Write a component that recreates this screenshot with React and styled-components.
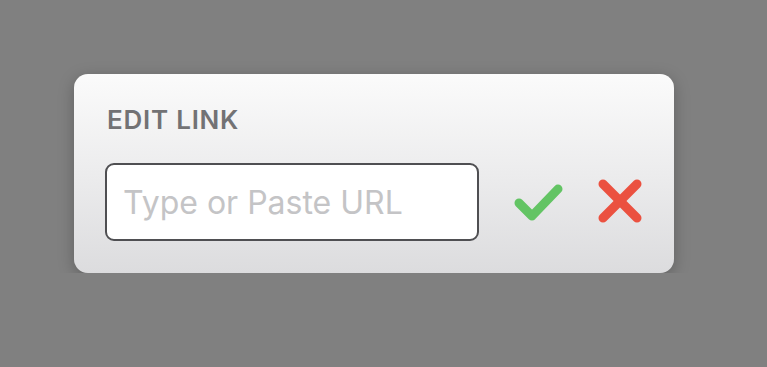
import React from "react";
import styled, { createGlobalStyle } from "styled-components";

const GlobalStyle = createGlobalStyle`
  html, body {
    margin: 0;
    background: #808080;
    font-family: "Inter", "Liberation Sans", sans-serif;
  }
`;

const Page = styled.div`
  padding: 74px 0 0 74px;
`;

const Card = styled.div`
  width: 600px;
  height: 199px;
  box-sizing: border-box;
  padding: 30px 31px 0 31px;
  border-radius: 14px;
  background: linear-gradient(180deg, #fbfbfb 0%, #ececed 50%, #dcdcde 100%);
  box-shadow: 0 4px 16px rgba(0, 0, 0, 0.25);
`;

const Title = styled.div`
  font-size: 26px;
  font-weight: 600;
  color: #727274;
  letter-spacing: 0.75px;
  padding-left: 2px;
  line-height: 32px;
`;

const Row = styled.div`
  display: flex;
  align-items: center;
  margin-top: 27px;
`;

const UrlInput = styled.input`
  width: 374px;
  height: 78px;
  box-sizing: border-box;
  border: 2px solid #4f4f52;
  border-radius: 9px;
  background: #fff;
  padding: 0 16px;
  font-family: inherit;
  font-size: 32px;
  color: #333;
  outline: none;

  &::placeholder {
    color: #c4c4c6;
  }
`;

const IconButton = styled.button`
  border: none;
  background: none;
  padding: 0;
  margin-left: ${(p) => p.$gap}px;
  display: flex;
  cursor: pointer;
`;

function Check() {
  return (
    <svg width="50" height="40" viewBox="0 0 50 40">
      <polyline
        points="5,21 18,34 44,7"
        fill="none"
        stroke="#63c464"
        strokeWidth="9"
        strokeLinecap="round"
        strokeLinejoin="round"
      />
    </svg>
  );
}

function Cross() {
  return (
    <svg width="48" height="48" viewBox="0 0 48 48">
      <g stroke="#eb5140" strokeWidth="9" strokeLinecap="round">
        <line x1="6" y1="6" x2="40" y2="40" />
        <line x1="40" y1="6" x2="6" y2="40" />
      </g>
    </svg>
  );
}

export default function App() {
  return (
    <>
      <GlobalStyle />
      <Page>
        <Card>
          <Title>EDIT LINK</Title>
          <Row>
            <UrlInput placeholder="Type or Paste URL" />
            <IconButton $gap={35}>
              <Check />
            </IconButton>
            <IconButton $gap={33}>
              <Cross />
            </IconButton>
          </Row>
        </Card>
      </Page>
    </>
  );
}
